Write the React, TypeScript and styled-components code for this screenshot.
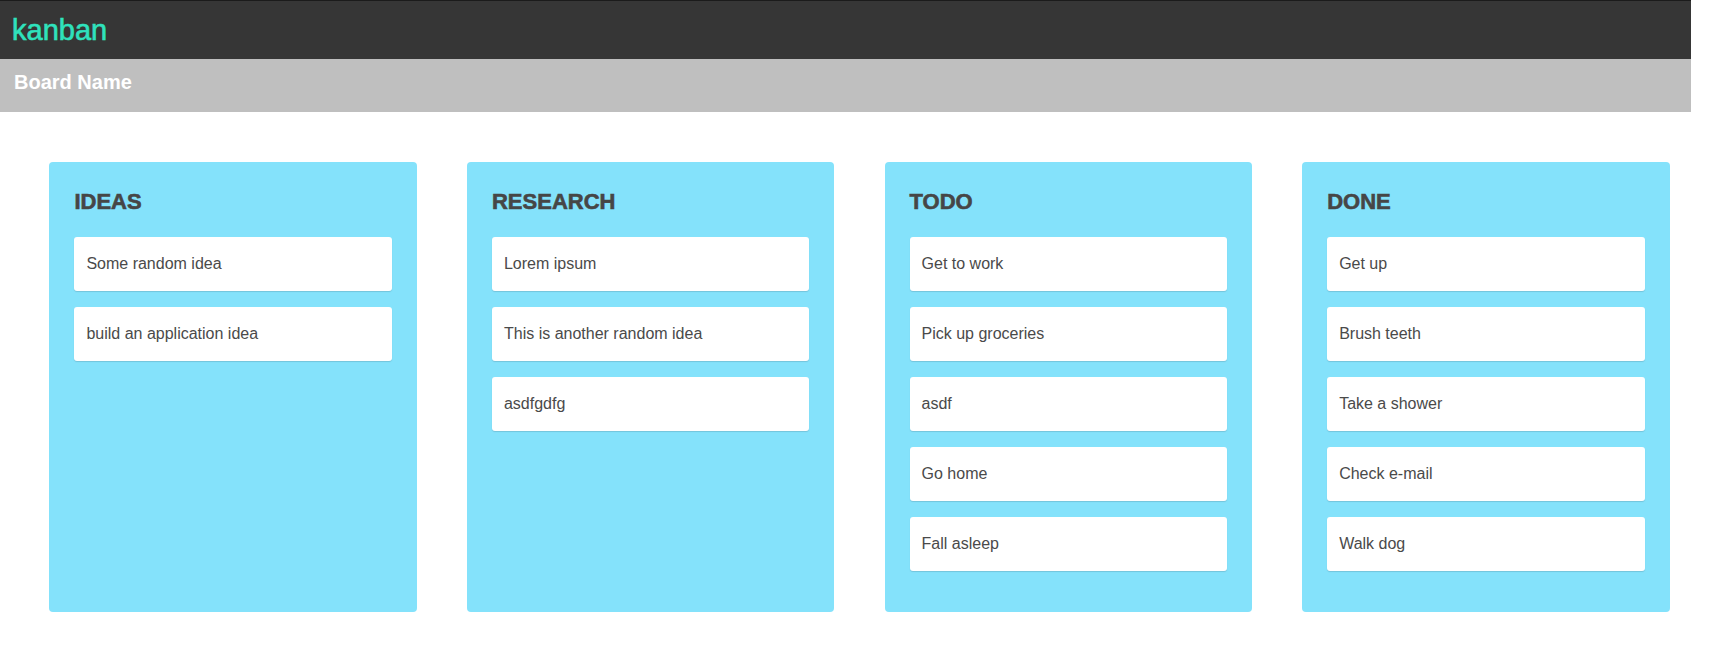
import React from "react";
import styled, { createGlobalStyle } from "styled-components";

const GlobalStyle = createGlobalStyle`
  html, body {
    margin: 0;
    padding: 0;
    background: #ffffff;
    font-family: "Liberation Sans", Arial, sans-serif;
  }
  * { box-sizing: border-box; }
`;

const Page = styled.div`
  width: 1721px;
  min-height: 670px;
`;

const TopBar = styled.header`
  width: 1691px;
  height: 59px;
  background: #363636;
  border-top: 1px solid #1b1b1b;
  display: flex;
  align-items: center;
  padding-left: 12px;
`;

const Logo = styled.h1`
  margin: 0;
  font-size: 29px;
  font-weight: 400;
  color: #2fe2bd;
  -webkit-text-stroke: 0.6px #2fe2bd;
  line-height: 33px;
`;

const BoardBar = styled.div`
  width: 1691px;
  height: 53px;
  background: #bfbfbf;
  padding: 12px 0 0 14px;
`;

const BoardTitle = styled.h2`
  margin: 0;
  font-size: 20px;
  line-height: 22px;
  font-weight: 700;
  color: #ffffff;
`;

const Columns = styled.main`
  display: flex;
  gap: 50.2px;
  padding: 50px 0 0 49.4px;
`;

const Column = styled.section`
  width: 367.4px;
  height: 450px;
  background: #84e2fb;
  border-radius: 4px;
  padding: 27px 25px 0 25px;
  display: flex;
  flex-direction: column;
`;

const ColumnTitle = styled.h3`
  margin: 0 0 23px 0;
  font-size: 22px;
  line-height: 25px;
  font-weight: 700;
  color: #464646;
  -webkit-text-stroke: 0.6px #464646;
  text-transform: uppercase;
`;

const CardList = styled.ul`
  list-style: none;
  margin: 0;
  padding: 0;
  display: flex;
  flex-direction: column;
  gap: 16px;
`;

const Card = styled.li`
  height: 54px;
  background: #ffffff;
  border-radius: 3px;
  box-shadow: 0 1px 1px rgba(60, 90, 110, 0.22);
  display: flex;
  align-items: center;
  padding-left: 12px;
  font-size: 16px;
  color: #4a4a4a;
`;

const board = [
  { title: "Ideas", cards: ["Some random idea", "build an application idea"] },
  { title: "Research", cards: ["Lorem ipsum", "This is another random idea", "asdfgdfg"] },
  { title: "Todo", cards: ["Get to work", "Pick up groceries", "asdf", "Go home", "Fall asleep"] },
  { title: "Done", cards: ["Get up", "Brush teeth", "Take a shower", "Check e-mail", "Walk dog"] },
];

export default function App() {
  return (
    <Page>
      <GlobalStyle />
      <TopBar>
        <Logo>kanban</Logo>
      </TopBar>
      <BoardBar>
        <BoardTitle>Board Name</BoardTitle>
      </BoardBar>
      <Columns>
        {board.map((col) => (
          <Column key={col.title}>
            <ColumnTitle>{col.title}</ColumnTitle>
            <CardList>
              {col.cards.map((c) => (
                <Card key={c}>{c}</Card>
              ))}
            </CardList>
          </Column>
        ))}
      </Columns>
    </Page>
  );
}
